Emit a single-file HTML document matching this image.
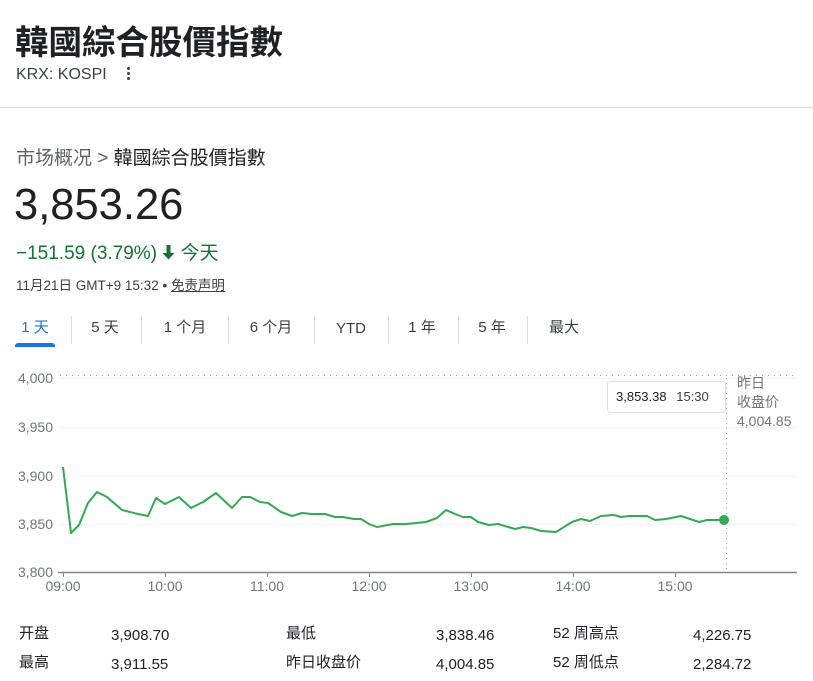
<!DOCTYPE html>
<html><head><meta charset="utf-8"><style>
body{margin:0;width:813px;height:681px;background:#fff;font-family:"Liberation Sans","Noto Sans CJK SC",sans-serif;position:relative;overflow:hidden;color:#202124}
.a{position:absolute;white-space:nowrap}
.tab{position:absolute;top:318px;height:20px;line-height:20px;font-size:15px;color:#3c4043;transform:translateX(-50%)}
.sep{position:absolute;top:316px;width:1px;height:28px;background:#dadce0}
.yl{position:absolute;left:0;width:53px;text-align:right;font-size:14px;color:#70757a}
.xl{position:absolute;top:578px;font-size:14px;color:#70757a;transform:translateX(-50%)}
.t{position:absolute;font-size:15px;line-height:18px;height:18px;color:#202124}
</style></head><body>
<div class="a" style="left:15px;top:15px;font-size:33.5px;font-weight:bold;color:#202124">韓國綜合股價指數</div>
<div class="a" style="left:16px;top:66px;font-size:16px;color:#3c4043">KRX: KOSPI</div>
<div class="a" style="left:127px;top:67px;width:3px;height:14px">
<div style="position:absolute;top:0;width:3px;height:3px;background:#3c4043;border-radius:50%"></div>
<div style="position:absolute;top:5px;width:3px;height:3px;background:#3c4043;border-radius:50%"></div>
<div style="position:absolute;top:10px;width:3px;height:3px;background:#3c4043;border-radius:50%"></div></div>
<div class="a" style="left:0;top:107px;width:813px;height:1px;background:#dadce0"></div>
<div class="a" style="left:16px;top:143px;font-size:19px;color:#5f6368">市场概况 &gt; <span style="color:#202124">韓國綜合股價指數</span></div>
<div class="a" style="left:14px;top:181px;font-size:43.5px;color:#202124">3,853.26</div>
<div class="a" style="left:16px;top:238px;font-size:19px;color:#137333">−151.59 (3.79%) <svg width="13" height="15" viewBox="0 0 13 15" style="vertical-align:-1px"><path d="M4.5 0H8.5V8H12.5L6.5 14.5L0.5 8H4.5Z" fill="#137333"/></svg> 今天</div>
<div class="a" style="left:16px;top:274px;font-size:13.5px;color:#3c4043">11月21日 GMT+9 15:32 • <span style="text-decoration:underline">免责声明</span></div>
<div class="tab" style="left:35px;color:#1a73e8">1 天</div>
<div class="tab" style="left:105px">5 天</div>
<div class="tab" style="left:185px">1 个月</div>
<div class="tab" style="left:271px">6 个月</div>
<div class="tab" style="left:351px;top:319px">YTD</div>
<div class="tab" style="left:422px">1 年</div>
<div class="tab" style="left:492px">5 年</div>
<div class="tab" style="left:564px">最大</div>
<div class="sep" style="left:71px"></div><div class="sep" style="left:141px"></div><div class="sep" style="left:228px"></div><div class="sep" style="left:314px"></div><div class="sep" style="left:388px"></div><div class="sep" style="left:458px"></div><div class="sep" style="left:527px"></div>
<div class="a" style="left:15px;top:343px;width:40px;height:4px;background:#1a73e8;border-radius:3px 3px 0 0"></div>

<svg class="a" style="left:0;top:0" width="813" height="681">
<g stroke="#f1f3f4" stroke-width="1"><line x1="58" y1="378.5" x2="795" y2="378.5"/><line x1="58" y1="427.5" x2="795" y2="427.5"/><line x1="58" y1="476.5" x2="795" y2="476.5"/><line x1="58" y1="524.5" x2="795" y2="524.5"/></g>
<line x1="60" y1="375.5" x2="795" y2="375.5" stroke="#9aa0a6" stroke-dasharray="1,5"/>
<line x1="726.5" y1="378" x2="726.5" y2="572" stroke="#9aa0a6" stroke-dasharray="1,4"/>
<line x1="58" y1="572.5" x2="797" y2="572.5" stroke="#80868b" stroke-width="1.5"/>
<g stroke="#80868b"><line x1="63.5" y1="572" x2="63.5" y2="577"/><line x1="165.5" y1="572" x2="165.5" y2="577"/><line x1="267.5" y1="572" x2="267.5" y2="577"/><line x1="369.5" y1="572" x2="369.5" y2="577"/><line x1="471.5" y1="572" x2="471.5" y2="577"/><line x1="573.5" y1="572" x2="573.5" y2="577"/><line x1="675.5" y1="572" x2="675.5" y2="577"/></g>
<path d="M63 467L71 533L79 525L88 503L97 492L107 497L122 510L138 514L148 516L156 498L165 504L179 497L191 508L203 502L216 493L232 508L242 497L250 497L260 502L268 503L281 512L292 516L302 513L312 514L325 514L335 517L343 517L354 519L361 519L369 524L377 527L393 524L406 524L426 522L437 518L446 510L455 514L463 517L471 517L478 522L489 525L498 524L515 529L523 527L531 528L541 531L556 532L572 522L581 519L590 521L601 516L614 515L621 517L629 516L647 516L655 520L666 519L681 516L699 522L707 520L724 520" fill="none" stroke="#34a853" stroke-width="2" stroke-linejoin="round"/>
<circle cx="724" cy="520" r="5" fill="#34a853"/>
<rect x="607.5" y="381.5" width="118" height="31" rx="3" fill="#fff" stroke="#e0e0e0"/>
</svg>
<div class="a" style="left:616px;top:389px;font-size:13px;color:#202124">3,853.38 <span style="margin-left:6px;color:#3c4043">15:30</span></div>
<div class="a" style="left:737px;top:374px;font-size:14px;color:#70757a;line-height:19px;white-space:normal">昨日<br>收盘价<br>4,004.85</div>
<div class="yl" style="top:370px">4,000</div>
<div class="yl" style="top:419px">3,950</div>
<div class="yl" style="top:468px">3,900</div>
<div class="yl" style="top:516px">3,850</div>
<div class="yl" style="top:564px">3,800</div>
<div class="xl" style="left:63px">09:00</div><div class="xl" style="left:165px">10:00</div><div class="xl" style="left:267px">11:00</div><div class="xl" style="left:369px">12:00</div><div class="xl" style="left:471px">13:00</div><div class="xl" style="left:573px">14:00</div><div class="xl" style="left:675px">15:00</div>

<div class="t" style="left:19px;top:625px">开盘</div><div class="t" style="left:111px;top:627px">3,908.70</div>
<div class="t" style="left:286px;top:625px">最低</div><div class="t" style="left:436px;top:627px">3,838.46</div>
<div class="t" style="left:553px;top:625px">52 周高点</div><div class="t" style="left:693px;top:627px">4,226.75</div>
<div class="t" style="left:19px;top:654px">最高</div><div class="t" style="left:111px;top:656px">3,911.55</div>
<div class="t" style="left:286px;top:654px">昨日收盘价</div><div class="t" style="left:436px;top:656px">4,004.85</div>
<div class="t" style="left:553px;top:654px">52 周低点</div><div class="t" style="left:693px;top:656px">2,284.72</div>
</body></html>
